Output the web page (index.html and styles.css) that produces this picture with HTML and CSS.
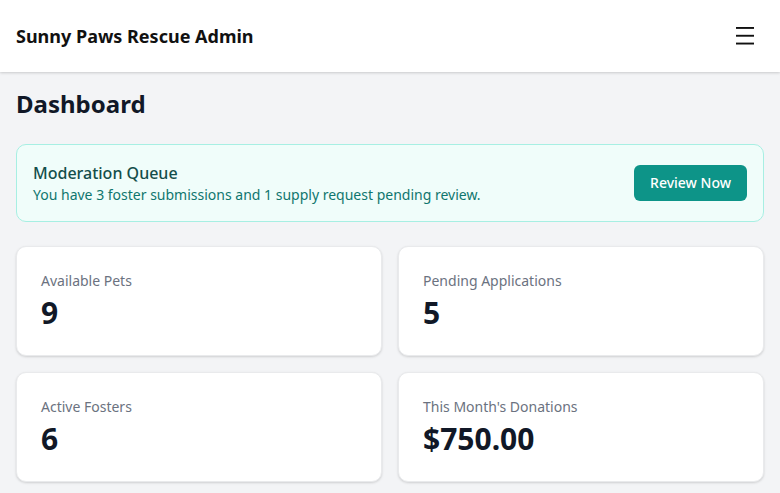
FILE: index.html
```html
<!DOCTYPE html>
<html lang="en">
<head>
<meta charset="utf-8">
<title>Sunny Paws Rescue Admin</title>
<link rel="stylesheet" href="styles.css">
</head>
<body>
<header class="topbar">
  <div class="brand">Sunny Paws Rescue Admin</div>
  <button class="menu-btn" aria-label="Menu">
    <svg width="20" height="20" viewBox="0 0 20 20" aria-hidden="true">
      <rect x="1" y="1" width="18" height="1.9" fill="#111"/>
      <rect x="1" y="8.8" width="18" height="1.9" fill="#111"/>
      <rect x="1" y="16.6" width="18" height="1.9" fill="#111"/>
    </svg>
  </button>
</header>
<main class="content">
  <h1 class="page-title">Dashboard</h1>
  <section class="alert">
    <div class="alert-text">
      <div class="alert-title">Moderation Queue</div>
      <div class="alert-body">You have 3 foster submissions and 1 supply request pending review.</div>
    </div>
    <button class="btn-primary">Review Now</button>
  </section>
  <section class="stats">
    <div class="card">
      <div class="card-label">Available Pets</div>
      <div class="card-value">9</div>
    </div>
    <div class="card">
      <div class="card-label">Pending Applications</div>
      <div class="card-value">5</div>
    </div>
    <div class="card">
      <div class="card-label">Active Fosters</div>
      <div class="card-value">6</div>
    </div>
    <div class="card">
      <div class="card-label">This Month's Donations</div>
      <div class="card-value">$750.00</div>
    </div>
  </section>
</main>
</body>
</html>
```

FILE: styles.css
```css
* { box-sizing: border-box; }
html, body { margin: 0; padding: 0; }
body {
  font-family: "Noto Sans", "Open Sans", sans-serif;
  background: #f3f4f6;
  color: #111827;
}
.topbar {
  height: 72px;
  background: #ffffff;
  display: flex;
  align-items: center;
  justify-content: space-between;
  padding: 0 16px;
  box-shadow: 0 1px 3px rgba(0,0,0,0.12), 0 1px 2px rgba(0,0,0,0.06);
  position: relative;
}
.brand {
  font-size: 18px;
  line-height: 28px;
  font-weight: 700;
  color: #111111;
}
.menu-btn {
  background: none;
  border: 0;
  padding: 0;
  margin-right: 9px;
  width: 20px;
  height: 20px;
  display: flex;
}
.content {
  padding: 16px;
}
.page-title {
  margin: 0 0 24px;
  font-size: 24px;
  line-height: 32px;
  font-weight: 700;
  color: #111827;
}
.alert {
  display: flex;
  align-items: center;
  justify-content: space-between;
  background: #f0fdfa;
  border: 1px solid #a7efe3;
  border-radius: 10px;
  padding: 16px;
  margin-bottom: 24px;
}
.alert-title {
  font-size: 16px;
  line-height: 24px;
  font-weight: 500;
  color: #134e4a;
}
.alert-body {
  font-size: 14px;
  line-height: 20px;
  color: #0f766e;
}
.btn-primary {
  font-family: inherit;
  background: #0d9488;
  color: #ffffff;
  border: 0;
  border-radius: 6px;
  padding: 8px 16px;
  font-size: 14px;
  line-height: 20px;
  font-weight: 500;
}
.stats {
  display: grid;
  grid-template-columns: 1fr 1fr;
  gap: 16px;
}
.card {
  background: #ffffff;
  border: 1px solid #e9eaec;
  border-radius: 10px;
  padding: 24px;
  box-shadow: 0 1px 3px rgba(0,0,0,0.10), 0 1px 2px rgba(0,0,0,0.06);
}
.card-label {
  font-size: 14px;
  line-height: 20px;
  color: #6b7280;
}
.card-value {
  margin-top: 4px;
  font-size: 30px;
  line-height: 36px;
  font-weight: 700;
  color: #111827;
}
```
